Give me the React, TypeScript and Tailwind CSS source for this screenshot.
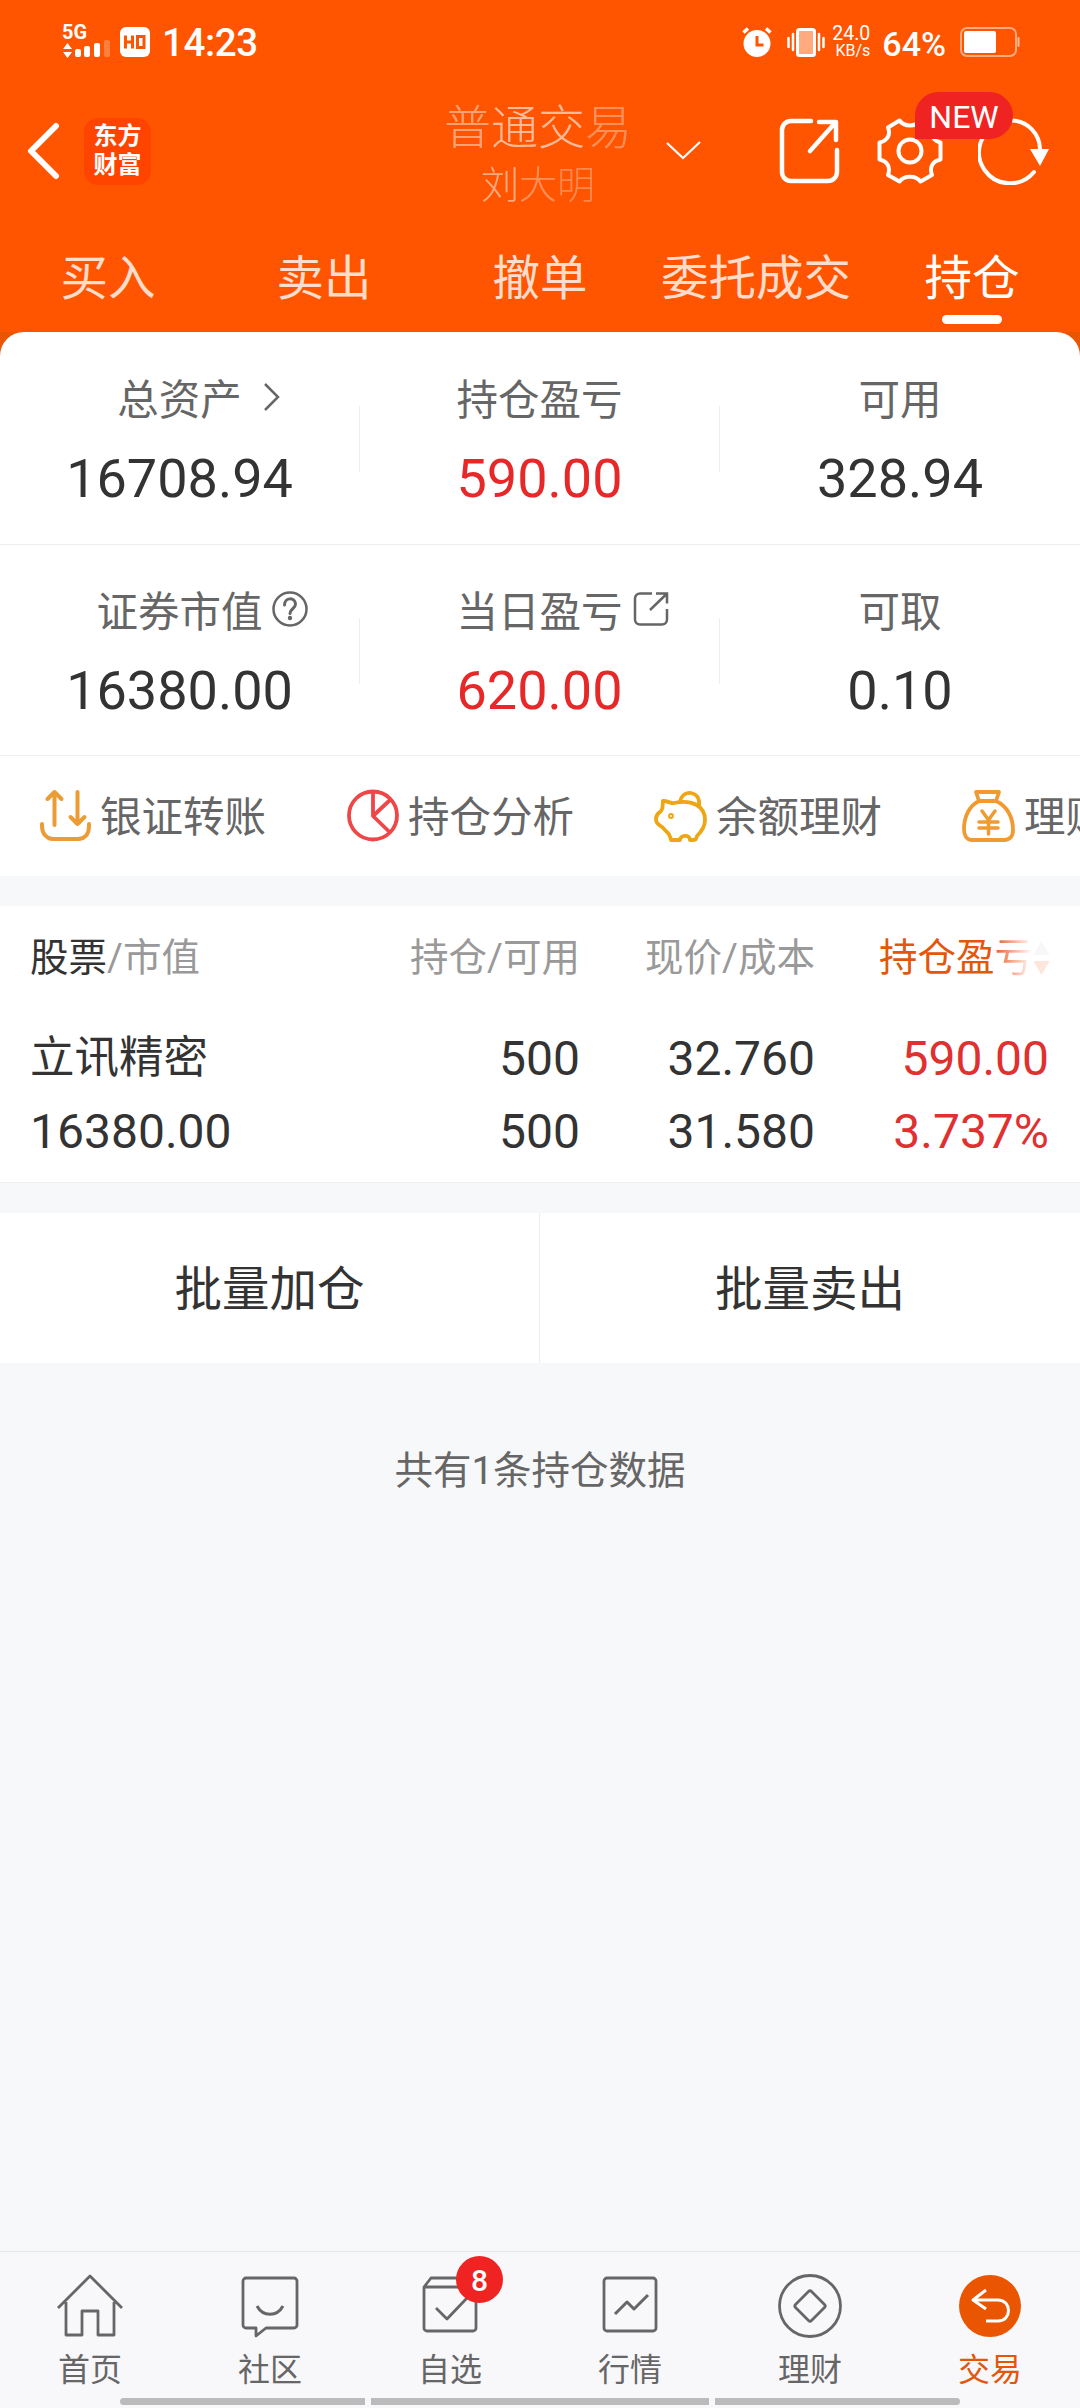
import type { ReactNode } from "react";

const tabs = ["买入", "卖出", "撤单", "委托成交", "持仓"];

const StatusBar = () => (
  <div className="flex h-[84px] items-center justify-between pl-[62px] pr-[60px] text-white">
    <div className="flex items-center">
      <svg width="50" height="48" viewBox="0 -8 50 48" className="mt-[-2px]">
        <text x="0" y="13.500" fontSize="19.500" fontWeight="700" fill="#fff" textLength="25" lengthAdjust="spacingAndGlyphs">5G</text>
        <path d="M5.500 18l4.500 6H1zM5.500 33L1 27h9z" fill="#fff" />
        <rect x="13" y="24" width="6" height="8" rx="2" fill="#fff" />
        <rect x="22" y="21" width="6" height="11" rx="2" fill="#fff" />
        <rect x="32" y="18" width="6" height="14" rx="2" fill="#fff" />
        <rect x="42" y="15" width="6" height="17" rx="2" fill="#fff" opacity="0.25" />
      </svg>
      <svg width="30" height="30" viewBox="0 0 30 30" className="ml-2">
        <rect width="30" height="30" rx="6" fill="#fff" />
        <path d="M5.500 8.500v13M12.500 8.500v13M5.500 15h7M17.500 9.500h6.500v11h-6.500z" fill="none" stroke="#ff5500" strokeWidth="3" />
      </svg>
      <span className="ml-[12px] pt-[2px] text-[38.500px] leading-none font-medium tracking-[-0.4px]">14:23</span>
    </div>
    <div className="flex items-center">
      <svg width="30" height="32" viewBox="0 0 30 32">
        <circle cx="15" cy="17.500" r="13.500" fill="#fff" />
        <path d="M1.500 6.500L6 2.500M28.500 6.500L24 2.500" stroke="#fff" strokeWidth="3.500" />
        <path d="M15 10v9h6.500" fill="none" stroke="#ff5500" strokeWidth="3" />
      </svg>
      <svg width="40" height="32" viewBox="0 0 40 32" className="ml-[14px]">
        <rect x="11.500" y="3.500" width="17" height="26" rx="2" fill="#fff" fillOpacity="0.5" stroke="#fff" strokeWidth="3" />
        <path d="M7 8v16M2.500 12v9M33 8v16M37.500 12v9" stroke="#fff" strokeWidth="2.500" strokeLinecap="round" />
      </svg>
      <div className="ml-[6px] text-right leading-[17px]">
        <p className="text-[19.500px]">24.0</p>
        <p className="text-[16px]">KB/s</p>
      </div>
      <span className="ml-[12px] pt-[3px] text-[34px] leading-none font-medium">64%</span>
      <svg width="60" height="30" viewBox="0 0 60 30" className="ml-[14px]">
        <rect x="1" y="1" width="55" height="28" rx="6" fill="none" stroke="#fff" strokeOpacity="0.5" strokeWidth="2" />
        <rect x="4" y="4" width="32" height="22" rx="2" fill="#fff" />
        <rect x="57.500" y="10" width="2" height="10" rx="1" fill="#fff" opacity="0.6" />
      </svg>
    </div>
  </div>
);

const TitleBar = () => (
  <div className="flex h-[134px] items-center text-white">
    <div className="flex w-[398px] items-center pl-[26px]">
      <svg width="34" height="58" viewBox="0 0 34 58">
        <path d="M30 4L5 29l25 25" fill="none" stroke="#fff" strokeWidth="6" strokeLinecap="round" strokeLinejoin="round" />
      </svg>
      <div className="ml-[24px] h-[67px] w-[67px] rounded-[14px] bg-[#ff4400] pt-[4px] text-center text-[24px] leading-[29px] font-bold">
        <p>东方</p>
        <p>财富</p>
      </div>
    </div>
    {/* Account name fades towards the right */}
    <div className="flex w-[280px] flex-col items-center pt-[8px]">
      <p className="text-[47px] leading-[60px] font-light">
        <span className="opacity-45">普</span>
        <span className="opacity-60">通</span>
        <span className="opacity-60">交</span>
        <span className="opacity-35">易</span>
      </p>
      <p className="text-[38px] leading-[54px] font-light">
        <span className="opacity-50">刘</span>
        <span className="opacity-35">大</span>
        <span className="opacity-30">明</span>
      </p>
    </div>
    <svg width="40" height="24" viewBox="0 0 40 24" className="ml-[-14px]">
      <path d="M3 4l16 15L36 3" fill="none" stroke="#fff" strokeWidth="2.200" />
    </svg>
    <svg width="62" height="68" viewBox="0 0 62 68" className="ml-[75px]">
      <path d="M32 4H12a9 9 0 0 0-9 9v42a9 9 0 0 0 9 9h37a9 9 0 0 0 9-9V33M40 5h17v18M56 6L31 34" fill="none" stroke="#fff" strokeWidth="4.500" strokeLinecap="round" strokeLinejoin="round" />
    </svg>
    <div className="relative ml-[35px] h-[68px] w-[68px]">
      <svg width="68" height="68" viewBox="0 0 68 68" fill="none" stroke="#fff" strokeWidth="4" strokeLinejoin="round">
        <path d="M23.500 3.500C28 10 40 10 44.500 3.500L56 10.500C53 18 58 24 64.500 25.500V42.500C57 44 53 50 56 58L44.500 64.500C40 58 28 58 23.500 64.500L12 58C15 50 11 44 3.500 42.500V25.500C11 24 15 18 12 10.500Z" />
        <circle cx="34" cy="34" r="11.500" />
      </svg>
      <span className="absolute top-[-25px] left-[39px] z-10 flex h-[47px] w-[98px] items-center justify-center rounded-full rounded-bl-none bg-[#f02323] pt-[2px] text-[32px] leading-none">
        NEW
      </span>
    </div>
    <svg width="72" height="68" viewBox="0 0 72 68" className="ml-[34px]">
      <path d="M22 6A31 31 0 1 0 56 55M34 3.500a29 29 0 0 1 28 29" fill="none" stroke="#fff" strokeWidth="4" strokeLinecap="round" />
      <path d="M52 32h19l-9 17z" fill="#fff" />
    </svg>
  </div>
);

type StatProps = { label: string; value: string; red?: boolean; icon?: ReactNode; divider?: boolean };

const Stat = ({ label, value, red, icon, divider }: StatProps) => (
  <div className="flex w-[360px] items-center">
    <div className="flex-1 pt-[5px]">
      <div className="flex h-[60px] items-center justify-center text-[41.500px] leading-[60px] text-[#666]">
        <span className="pt-[8px]">{label}</span>
        {icon}
      </div>
      <p className={`mt-[16px] text-center text-[54px] leading-[72px] ${red ? "text-[#e62828]" : "text-[#333]"}`}>{value}</p>
    </div>
    {divider && <div className="mt-[2px] h-[66px] w-px bg-[#eee]" />}
  </div>
);

// The icons hang outside the centred label, hence the negative right margins
const ArrowIcon = () => (
  <svg width="18" height="30" viewBox="0 0 18 30" className="mr-[-39px] ml-[21px]">
    <path d="M2 2l13 13L2 28" fill="none" stroke="#666" strokeWidth="2.500" />
  </svg>
);

const HelpIcon = () => (
  <svg width="36" height="36" viewBox="0 0 36 36" className="mr-[-45px] ml-[9px]" fill="none" stroke="#666" strokeWidth="2.500">
    <circle cx="18" cy="18" r="16.500" />
    <path d="M12.500 14c0-8 11-8 11-1 0 5-5.500 4.500-5.500 9.500" strokeWidth="3" strokeLinecap="round" />
    <circle cx="18" cy="27" r="2.200" fill="#666" stroke="none" />
  </svg>
);

const ShareIcon = () => (
  <svg width="36" height="36" viewBox="0 0 36 36" className="mr-[-46px] ml-[10px]">
    <path d="M19 2.500H7A5 5 0 0 0 2 7.500v21a5 5 0 0 0 5 5h22a5 5 0 0 0 5-5V18M23 2.500h11v10M33 3.500L17 19" fill="none" stroke="#666" strokeWidth="2.500" />
  </svg>
);

const quickLinks = [
  {
    label: "银证转账",
    icon: (
      <g stroke="#eb9c35" strokeWidth="4">
        <path d="M4 35v2c0 8 5 13 11 13h25c7 0 11-5 11-13v-2" />
        <path d="M16.500 36V4M9.500 10l7-7 7 7M39.500 3v32M32.500 28l7 7 7-7" />
      </g>
    ),
  },
  {
    label: "持仓分析",
    icon: (
      <g stroke="#ef4747" strokeWidth="3.800">
        <circle cx="27" cy="26.500" r="24" />
        <path d="M27 3v24L43.500 43M27 27l17-16" />
      </g>
    ),
  },
  {
    label: "余额理财",
    icon: (
      <g stroke="#eda715" strokeWidth="3.800">
        <path d="M9 12c5 0 9 3 11 2 18-4 31 3 31 17 0 8-5 13-8 16-1 4-1 4-7 4 0-6-10-5-10 0h-9c-2-7-2-6-7-11-2-4-8-3-8-10 0-5 2-5 5-8 3-4 1-6 2-10z" />
        <path d="M26 13c1-6 5-10 11-9 6 1 9 6 8 13" />
        <circle cx="17" cy="27" r="1" />
      </g>
    ),
  },
  {
    label: "理财",
    icon: (
      <g stroke="#f09a30" strokeWidth="3.800">
        <path d="M17 12L14 3h23l-3 9zM17 12C6 17 2 30 2 40c0 7 3 11 8 11h32c6 0 9-4 9-10 0-13-6-24-17-29" />
        <path d="M20 22l6.500 9 6.500-9M17 33h19M17 39h19M26.500 32v13" strokeWidth="3.500" />
      </g>
    ),
  },
];

const Summary = () => (
  <div className="rounded-t-[24px] bg-white">
    <div className="flex h-[213px] border-b border-[#eee]">
      <Stat label="总资产" value="16708.94" icon={<ArrowIcon />} divider />
      <Stat label="持仓盈亏" value="590.00" red divider />
      <Stat label="可用" value="328.94" />
    </div>
    <div className="flex h-[211px] border-b border-[#eee]">
      <Stat label="证券市值" value="16380.00" icon={<HelpIcon />} divider />
      <Stat label="当日盈亏" value="620.00" red icon={<ShareIcon />} divider />
      <Stat label="可取" value="0.10" />
    </div>
    <div className="flex h-[120px] overflow-hidden pl-[38px]">
      {quickLinks.map((link) => (
        <div key={link.label} className="flex w-[308px] shrink-0 items-center whitespace-nowrap text-[41.500px] text-[#666]">
          <svg width="53" height="53" viewBox="0 0 53 53" fill="none" strokeLinecap="round" strokeLinejoin="round" className="mt-[-2px]">
            {link.icon}
          </svg>
          <span className="ml-[9px] pt-[4px]">{link.label}</span>
        </div>
      ))}
    </div>
  </div>
);

const Positions = () => (
  <div className="mt-[30px] border-b border-[#eee] bg-white pr-[31px] pl-[30px]">
    <div className="grid h-[101px] grid-cols-[300px_250px_235px_1fr] items-center pt-[2px] text-right text-[38.500px] text-[#999]">
      <p className="text-left">
        <span className="text-[#333]">股票</span>/市值
      </p>
      <p>持仓/可用</p>
      <p>现价/成本</p>
      <div className="flex items-center justify-end text-[#e2570c]">
        持仓盈
        <span className="bg-linear-to-r from-[#e2570c] to-white bg-clip-text text-transparent">亏</span>
        <svg width="17" height="36" viewBox="0 0 17 36" className="mr-[-1px]">
          <path d="M8.500 1l8 14h-16z" fill="#f7f7f7" />
          <path d="M8.500 35l8-14h-16z" fill="#fde6db" />
        </svg>
      </div>
    </div>
    <div className="grid h-[175px] grid-cols-[300px_250px_235px_1fr] content-start pt-[15px] text-right text-[48px] leading-[73px] text-[#333]">
      <p className="text-left text-[44.500px]">立讯精密</p>
      <p>500</p>
      <p>32.760</p>
      <p className="text-[#e03030]">590.00</p>
      <p className="text-left">16380.00</p>
      <p>500</p>
      <p>31.580</p>
      <p className="text-[#e03030]">3.737%</p>
    </div>
  </div>
);

const navItems = [
  {
    label: "首页",
    icon: <path d="M2 35L34 3l32 32M10 29v33h16V38h16v24h16V29" />,
  },
  {
    label: "社区",
    icon: (
      <>
        <path d="M10 5h48a3 3 0 0 1 3 3v44a3 3 0 0 1-3 3H30l-10 8v-8H10a3 3 0 0 1-3-3V8a3 3 0 0 1 3-3z" />
        <path d="M21 33c6 11 20 11 26 0" strokeWidth="3" />
      </>
    ),
  },
  {
    label: "自选",
    badge: 8,
    icon: <path d="M8 14l7-9h37l8 9v41a3 3 0 0 1-3 3H11a3 3 0 0 1-3-3zM8 14h52M20 35l11 11 20-21" />,
  },
  {
    label: "行情",
    icon: (
      <>
        <rect x="8" y="5" width="52" height="53" rx="3" />
        <path d="M19 41l12-12 7 7 14-14" strokeWidth="3" />
      </>
    ),
  },
  {
    label: "理财",
    icon: (
      <>
        <circle cx="34" cy="33" r="30.500" />
        <path d="M32.500 18.500q1.500-1.500 3 0l13 13q1.500 1.500 0 3l-13 13q-1.500 1.500-3 0l-13-13q-1.500-1.500 0-3z" />
      </>
    ),
  },
  {
    label: "交易",
    active: true,
    icon: (
      <>
        <circle cx="34" cy="33" r="31" fill="#e95500" stroke="none" />
        <path d="M30 17L17 27l13 9M18 27h24c14 0 14 21 0 21H30" stroke="#fff" strokeWidth="3" />
      </>
    ),
  },
];

const BottomNav = () => (
  <div className="h-[157px] border-t border-[#e4e5e7] bg-[#f8f8fb]">
    <div className="grid h-[146px] grid-cols-6">
      {navItems.map((item) => (
        <div key={item.label} className="relative flex flex-col items-center pt-[21px]">
          <svg width="68" height="68" viewBox="0 0 68 68" fill="none" stroke="#666" strokeWidth="2.800" strokeLinejoin="round">
            {item.icon}
          </svg>
          <span className={`mt-[7px] text-[32px] leading-[44px] ${item.active ? "text-[#e2570c]" : "text-[#666]"}`}>{item.label}</span>
          {item.badge && (
            <span className="absolute top-[4px] left-[96px] flex h-[47px] w-[47px] items-center justify-center rounded-full bg-[#f02323] pt-[2px] text-[30px] leading-none font-medium text-white">
              {item.badge}
            </span>
          )}
        </div>
      ))}
    </div>
    <div className="flex justify-center gap-[6px]">
      <div className="h-[7px] w-[245px] rounded-l-full bg-[#bbb]" />
      <div className="h-[7px] w-[338px] bg-[#bbb]" />
      <div className="h-[7px] w-[245px] rounded-r-full bg-[#bbb]" />
    </div>
  </div>
);

export default function App() {
  return (
    <div className="flex h-[2408px] w-[1080px] flex-col overflow-hidden bg-[#f7f8fa] font-[Roboto,'Noto_Sans_CJK_SC',sans-serif]">
      <div className="bg-[#ff5500]">
        <StatusBar />
        <TitleBar />
        <div className="grid h-[114px] grid-cols-5 text-center text-[47.500px] leading-[70px] text-[#ffdccb]">
          {tabs.map((tab) => (
            <div key={tab} className="flex flex-col items-center pt-[26px]">
              <span className={tab === "持仓" ? "text-white" : ""}>{tab}</span>
              {tab === "持仓" && <div className="mt-px h-[9px] w-[60px] rounded-full bg-white" />}
            </div>
          ))}
        </div>
      </div>
      <div className="bg-[#e95500]">
        <Summary />
      </div>
      <Positions />
      <div className="mt-[30px] flex h-[150px] bg-white text-[47.500px] text-[#333]">
        <button className="w-[540px] border-r border-[#eee] pt-[6px]">批量加仓</button>
        <button className="w-[540px] pt-[6px]">批量卖出</button>
      </div>
      <p className="mt-[78px] text-center text-[38.500px] leading-[60px] text-[#666]">共有1条持仓数据</p>
      <div className="flex-1" />
      <BottomNav />
    </div>
  );
}
